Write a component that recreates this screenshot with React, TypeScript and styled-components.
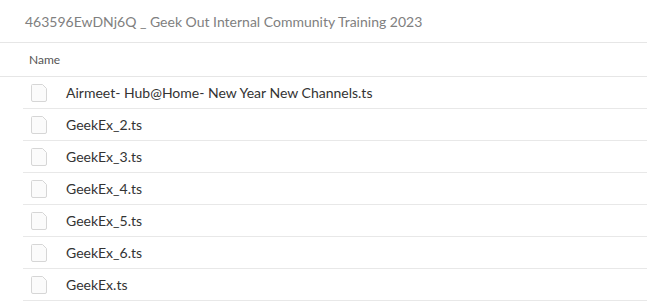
import React from 'react';
import styled, { createGlobalStyle } from 'styled-components';

const GlobalStyle = createGlobalStyle`
  html, body {
    margin: 0;
    padding: 0;
    background: #fff;
  }
  body {
    font-family: Lato, 'Liberation Sans', sans-serif;
  }
`;

const Page = styled.div`
  width: 647px;
  height: 306px;
  overflow: hidden;
  background: #fff;
`;

const Title = styled.div`
  height: 42px;
  padding-left: 25px;
  display: flex;
  align-items: center;
  font-size: 14px;
  color: #808080;
  border-bottom: 1px solid #e6e6e6;
`;

const HeaderRow = styled.div`
  height: 33px;
  padding-left: 29px;
  display: flex;
  align-items: center;
  font-size: 12px;
  color: #555;
  border-bottom: 1px solid #e6e6e6;
`;

const List = styled.div`
  padding-left: 23px;
`;

const Row = styled.div`
  height: 31px;
  display: flex;
  align-items: center;
  border-bottom: 1px solid #e8e8e8;
`;

const IconBox = styled.span`
  display: flex;
  padding-left: 7px;
  margin-right: 18px;
`;

const FileName = styled.span`
  font-size: 14px;
  color: #333;
`;

const FileIcon = () => (
  <svg width="18" height="20" viewBox="0 0 18 20">
    <path
      d="M2.5 1.5 H12.5 L16.5 5.5 V17 Q16.5 18.5 15 18.5 H3 Q1.5 18.5 1.5 17 V2.5 Q1.5 1.5 2.5 1.5 Z"
      fill="#fbfbfb"
      stroke="#d6d6d6"
      strokeWidth="1"
      strokeLinejoin="round"
    />
  </svg>
);

const files = [
  'Airmeet- Hub@Home- New Year New Channels.ts',
  'GeekEx_2.ts',
  'GeekEx_3.ts',
  'GeekEx_4.ts',
  'GeekEx_5.ts',
  'GeekEx_6.ts',
  'GeekEx.ts',
];

export default function App() {
  return (
    <Page>
      <GlobalStyle />
      <Title>463596EwDNj6Q _ Geek Out Internal Community Training 2023</Title>
      <HeaderRow>Name</HeaderRow>
      <List>
        {files.map((name) => (
          <Row key={name}>
            <IconBox>
              <FileIcon />
            </IconBox>
            <FileName>{name}</FileName>
          </Row>
        ))}
      </List>
    </Page>
  );
}
